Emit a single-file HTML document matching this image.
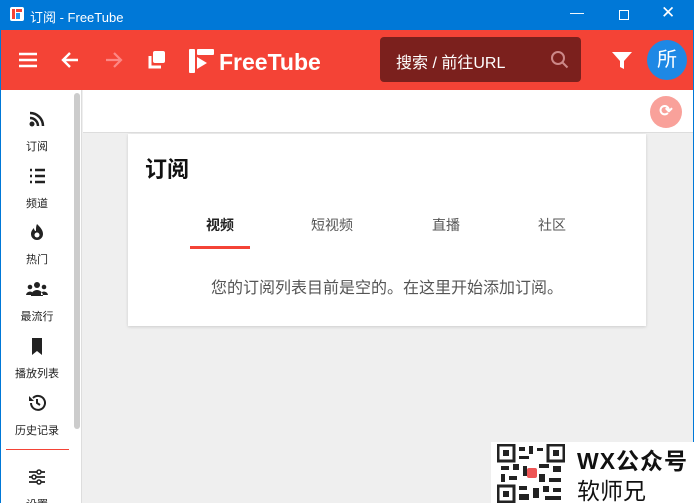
<!DOCTYPE html><html><head><meta charset="utf-8"><style>
*{margin:0;padding:0;box-sizing:border-box}
html,body{width:694px;height:503px;overflow:hidden}
body{background:#0078d7;font-family:"Liberation Sans","Noto Sans CJK SC",sans-serif;position:relative}
.t{position:absolute;left:0;top:0;width:694px;height:30px;background:#0078d7;color:#fff;font-size:13px}
.hdr{position:absolute;left:1px;top:30px;width:692px;height:60px;background:#f44336}
.main{position:absolute;left:1px;top:90px;width:692px;height:413px;background:#efefef}
.side{position:absolute;left:0;top:0;width:81px;height:413px;background:#fff;border-right:1px solid #ddd}
.it{position:absolute;left:0;width:72px;text-align:center;font-size:11px;color:#222;line-height:14px}
.it svg{display:block;margin:0 auto 12px}
.top{position:absolute;left:82px;top:0;right:0;height:43px;background:#fff;border-bottom:1px solid #ddd}
.card{position:absolute;left:127px;top:44px;width:518px;height:192px;background:#fff;box-shadow:0 1px 3px rgba(0,0,0,.15)}
</style></head><body>
<div class="t">
<div style="position:absolute;left:10px;top:7px;width:14px;height:14px;background:#fff;border-radius:2px"><div style="position:absolute;left:2px;top:2px;width:3px;height:10px;background:#f44336"></div><div style="position:absolute;left:6px;top:2px;width:6px;height:3px;background:#f44336"></div><div style="position:absolute;left:6px;top:6px;width:4px;height:6px;background:#2196f3"></div></div>
<span style="position:absolute;left:30px;top:7px">订阅 - FreeTube</span>
<span style="position:absolute;left:570px;top:4px;font-size:14px">—</span>
<div style="position:absolute;left:619px;top:10px;width:10px;height:10px;border:1px solid #fff"></div>
<span style="position:absolute;left:661px;top:3px;font-size:17px">✕</span>
</div>
<div class="hdr">
<svg style="position:absolute;left:17px;top:22px" width="20" height="16"><path d="M1 2h18M1 8h18M1 14h18" stroke="#fff" stroke-width="2.4"/></svg>
<svg style="position:absolute;left:59px;top:20px" width="20" height="20"><path d="M18 10H3M10 3L3 10l7 7" stroke="#fff" stroke-width="2.4" fill="none"/></svg>
<svg style="position:absolute;left:103px;top:20px" width="20" height="20"><path d="M2 10h15M10 3l7 7-7 7" stroke="#f99" stroke-width="2.2" fill="none" opacity=".8"/></svg>
<svg style="position:absolute;left:145px;top:19px" width="22" height="22"><rect x="7" y="2" width="12" height="12" rx="2" fill="#fff"/><path d="M4 7v11h11" stroke="#fff" stroke-width="3" fill="none"/></svg>
<svg style="position:absolute;left:188px;top:18px" width="26" height="26"><rect x="0" y="1" width="6" height="24" rx="1" fill="#fff"/><rect x="8" y="1" width="17" height="6" rx="1" fill="#fff"/><path d="M8 9l10 6-10 6z" fill="#fff"/></svg>
<span style="position:absolute;left:218px;top:19px;color:#fff;font-size:23px;font-weight:bold">FreeTube</span>
<div style="position:absolute;left:379px;top:7px;width:201px;height:45px;background:#7b201d;border-radius:4px">
<span style="position:absolute;left:16px;top:12px;color:#fff;font-size:16px">搜索 / 前往URL</span>
<svg style="position:absolute;left:170px;top:13px" width="20" height="20"><circle cx="8" cy="8" r="6" stroke="#c88" stroke-width="2" fill="none"/><path d="M12.5 12.5l5 5" stroke="#c88" stroke-width="2"/></svg></div>
<svg style="position:absolute;left:610px;top:21px" width="22" height="20"><path d="M1 1h20l-8 9v8l-4-2v-6z" fill="#fff"/></svg>
<div style="position:absolute;left:646px;top:10px;width:40px;height:40px;border-radius:50%;background:#1e88e5;color:#fff;font-size:20px;text-align:center;line-height:40px">所</div>
</div>
<div class="main">
<div class="top"><div style="position:absolute;right:11px;top:6px;width:32px;height:32px;border-radius:50%;background:#f9a19a;color:#fff;text-align:center;line-height:32px;font-size:16px;font-weight:bold">⟳</div></div>
<div class="side">
<div style="position:absolute;left:73px;top:3px;width:6px;height:336px;background:#ccc;border-radius:3px"></div>
<div class="it" style="top:20px"><svg width="18" height="18"><circle cx="4" cy="14" r="2.5" fill="#222"/><path d="M2 8a8 8 0 0 1 8 8M2 3a13 13 0 0 1 13 13" stroke="#222" stroke-width="2.5" fill="none"/></svg>订阅</div>
<div class="it" style="top:77px"><svg width="18" height="18"><path d="M2 3h2M7 3h10M2 9h2M7 9h10M2 15h2M7 15h10" stroke="#222" stroke-width="2.6"/></svg>频道</div>
<div class="it" style="top:133px"><svg width="18" height="18"><path d="M9 1c3 3 6 6 6 10a6 6 0 0 1-12 0c0-3 2-5 3-6 0 2 1 3 2 3 0-3 0-5 1-7z" fill="#222"/><circle cx="9" cy="12" r="2.5" fill="#fff"/></svg>热门</div>
<div class="it" style="top:190px"><svg width="22" height="18"><circle cx="11" cy="5" r="3" fill="#222"/><circle cx="4" cy="7" r="2.3" fill="#222"/><circle cx="18" cy="7" r="2.3" fill="#222"/><path d="M5 16a6 6 0 0 1 12 0zM0 15a4 4 0 0 1 7-2v2zM22 15a4 4 0 0 0-7-2v2z" fill="#222"/></svg>最流行</div>
<div class="it" style="top:247px"><svg width="18" height="18"><path d="M4 1h10v17l-5-4-5 4z" fill="#222"/></svg>播放列表</div>
<div class="it" style="top:304px"><svg width="18" height="18"><path d="M3 9a7 7 0 1 0 2-5" stroke="#222" stroke-width="2" fill="none"/><path d="M1 2v5h5z" fill="#222"/><path d="M9 5v4l3 2" stroke="#222" stroke-width="2" fill="none"/></svg>历史记录</div>
<div style="position:absolute;left:5px;top:359px;width:63px;height:1px;background:#f44336"></div>
<div class="it" style="top:378px"><svg width="18" height="18"><path d="M1 4h16M1 9h16M1 14h16" stroke="#222" stroke-width="1.8"/><circle cx="11" cy="4" r="2" fill="#fff" stroke="#222" stroke-width="1.5"/><circle cx="6" cy="9" r="2" fill="#fff" stroke="#222" stroke-width="1.5"/><circle cx="11" cy="14" r="2" fill="#fff" stroke="#222" stroke-width="1.5"/></svg>设置</div>
</div>
<div class="card">
<div style="position:absolute;left:17px;top:18px;font-size:22px;font-weight:bold;color:#111">订阅</div>
<div style="position:absolute;left:78px;top:81px;font-size:14px;font-weight:bold;color:#222">视频</div>
<div style="position:absolute;left:62px;top:112px;width:60px;height:3px;background:#f44336"></div>
<div style="position:absolute;left:183px;top:81px;font-size:14px;color:#555">短视频</div>
<div style="position:absolute;left:304px;top:81px;font-size:14px;color:#555">直播</div>
<div style="position:absolute;left:410px;top:81px;font-size:14px;color:#555">社区</div>
<div style="position:absolute;left:0;width:518px;text-align:center;top:140px;font-size:16px;color:#555">您的订阅列表目前是空的。在这里开始添加订阅。</div>
</div>
<div style="position:absolute;left:490px;top:352px;width:203px;height:61px;background:#fff">
<svg style="position:absolute;left:6px;top:2px" width="68" height="59"><rect width="68" height="59" fill="#fff"/><rect x="1" y="1" width="16" height="16" fill="none" stroke="#222" stroke-width="3"/><rect x="6" y="6" width="6" height="6" fill="#222"/><rect x="51" y="1" width="16" height="16" fill="none" stroke="#222" stroke-width="3"/><rect x="56" y="6" width="6" height="6" fill="#222"/><rect x="1" y="42" width="16" height="16" fill="none" stroke="#222" stroke-width="3"/><rect x="6" y="47" width="6" height="6" fill="#222"/><path d="M22 3h6v4h-6zM32 2h4v8h-4zM40 4h6v3h-6zM22 12h10v3H22zM4 22h8v4H4zM16 20h6v6h-6zM26 22h4v10h-4zM42 20h10v4H42zM56 22h8v6h-8zM4 30h4v8H4zM12 32h8v4h-8zM42 30h6v8h-6zM52 34h12v4H52zM22 42h8v4h-8zM36 44h6v10h-6zM46 42h6v6h-6zM56 44h8v4h-8zM22 50h10v6H22zM48 52h16v4H48z" fill="#222"/><rect x="30" y="24" width="10" height="10" rx="2" fill="#e55"/></svg>
<div style="position:absolute;left:86px;top:0px;font-size:23px;color:#111;font-weight:bold;letter-spacing:1px">WX公众号</div>
<div style="position:absolute;left:86px;top:30px;font-size:23px;color:#111">软师兄</div>
</div>
</div>
</body></html>
